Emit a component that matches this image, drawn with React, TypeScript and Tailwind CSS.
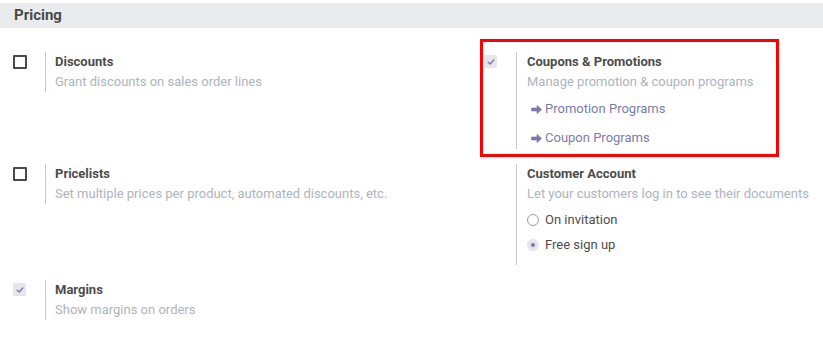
import React from 'react'

const Check = () => (
  <svg width="8" height="8" viewBox="0 0 8 8">
    <path d="M1.2 4.2 L3.2 6 L6.8 2" fill="none" stroke="#7c7bad" strokeWidth="1.4" strokeLinecap="round" strokeLinejoin="round" />
  </svg>
)

const Arrow = () => (
  <svg width="11" height="11" viewBox="0 0 11 11">
    <path d="M0.5 4 H6 V1.2 L10.6 5.5 L6 9.8 V7 H0.5 Z" fill="#7c7bad" strokeLinejoin="round" stroke="#7c7bad" strokeWidth="0.6" />
  </svg>
)

const Box = ({ checked }: { checked?: boolean }) =>
  checked ? (
    <div className="w-[13px] h-[13px] rounded-[2px] bg-[#e4e6ec] flex items-center justify-center">
      <Check />
    </div>
  ) : (
    <div className="w-[14px] h-[14px] rounded-[1px] border-2 border-[#4a4a4a] bg-white" />
  )

const Setting = ({
  checkbox,
  title,
  desc,
  right,
  children,
}: {
  checkbox?: 'on' | 'off'
  title: string
  desc: string
  right?: boolean
  children?: React.ReactNode
}) => (
  <div className="flex items-start">
    <div className="w-[45px] shrink-0 pl-[13px] pt-[3px]">
      {checkbox && <Box checked={checkbox === 'on'} />}
    </div>
    <div className={right ? 'border-l border-[#c8c8c8] pl-[10px]' : 'border-l border-[#c8c8c8] pl-[9px]'}>
      <div className="font-bold text-[13px] leading-[20px] text-[#4c4c4c]">{title}</div>
      <div className="text-[13px] leading-[20px] text-[#adb5bd]">{desc}</div>
      {children}
    </div>
  </div>
)

const Link = ({ label }: { label: string }) => (
  <div className="flex items-center h-[20px] text-[13px] text-[#7c7bad] pl-[4px] gap-[3px]">
    <Arrow />
    <span>{label}</span>
  </div>
)

const Radio = ({ label, checked }: { label: string; checked?: boolean }) => (
  <div className="flex items-center h-[20px] text-[13px] text-[#4c4c4c] gap-[6px]">
    {checked ? (
      <div className="w-[12px] h-[12px] rounded-full bg-[#e4e6ec] flex items-center justify-center">
        <div className="w-[4px] h-[4px] rounded-full bg-[#7c7bad]" />
      </div>
    ) : (
      <div className="w-[12px] h-[12px] rounded-full border border-[#9aa0a6] bg-white" />
    )}
    <span>{label}</span>
  </div>
)

export default function App() {
  return (
    <div className="w-[823px] h-[354px] bg-white overflow-hidden" style={{ fontFamily: 'Roboto, "Liberation Sans", sans-serif' }}>
      <div className="mt-[3px] h-[25px] bg-[#e9ecef] pl-[14px] flex items-center">
        <span className="font-bold text-[15px] text-[#4a4a4a]">Pricing</span>
      </div>
      <div className="grid grid-cols-[471px_1fr] items-start mt-[24px] gap-y-[15px]">
        <Setting checkbox="off" title="Discounts" desc="Grant discounts on sales order lines" />
        <div className="relative">
          <Setting right checkbox="on" title="Coupons & Promotions" desc="Manage promotion & coupon programs">
            <div className="mt-[7px] flex flex-col gap-[9px] pb-[1px]">
              <Link label="Promotion Programs" />
              <Link label="Coupon Programs" />
            </div>
          </Setting>
          <div className="absolute left-[9px] top-[-13px] w-[299px] h-[118px] border-[3px] border-[#ff0000]" />
        </div>
        <Setting checkbox="off" title="Pricelists" desc="Set multiple prices per product, automated discounts, etc." />
        <Setting right title="Customer Account" desc="Let your customers log in to see their documents">
          <div className="mt-[6px] flex flex-col gap-[5px] pb-[10px]">
            <Radio label="On invitation" />
            <Radio label="Free sign up" checked />
          </div>
        </Setting>
        <Setting checkbox="on" title="Margins" desc="Show margins on orders" />
      </div>
    </div>
  )
}
